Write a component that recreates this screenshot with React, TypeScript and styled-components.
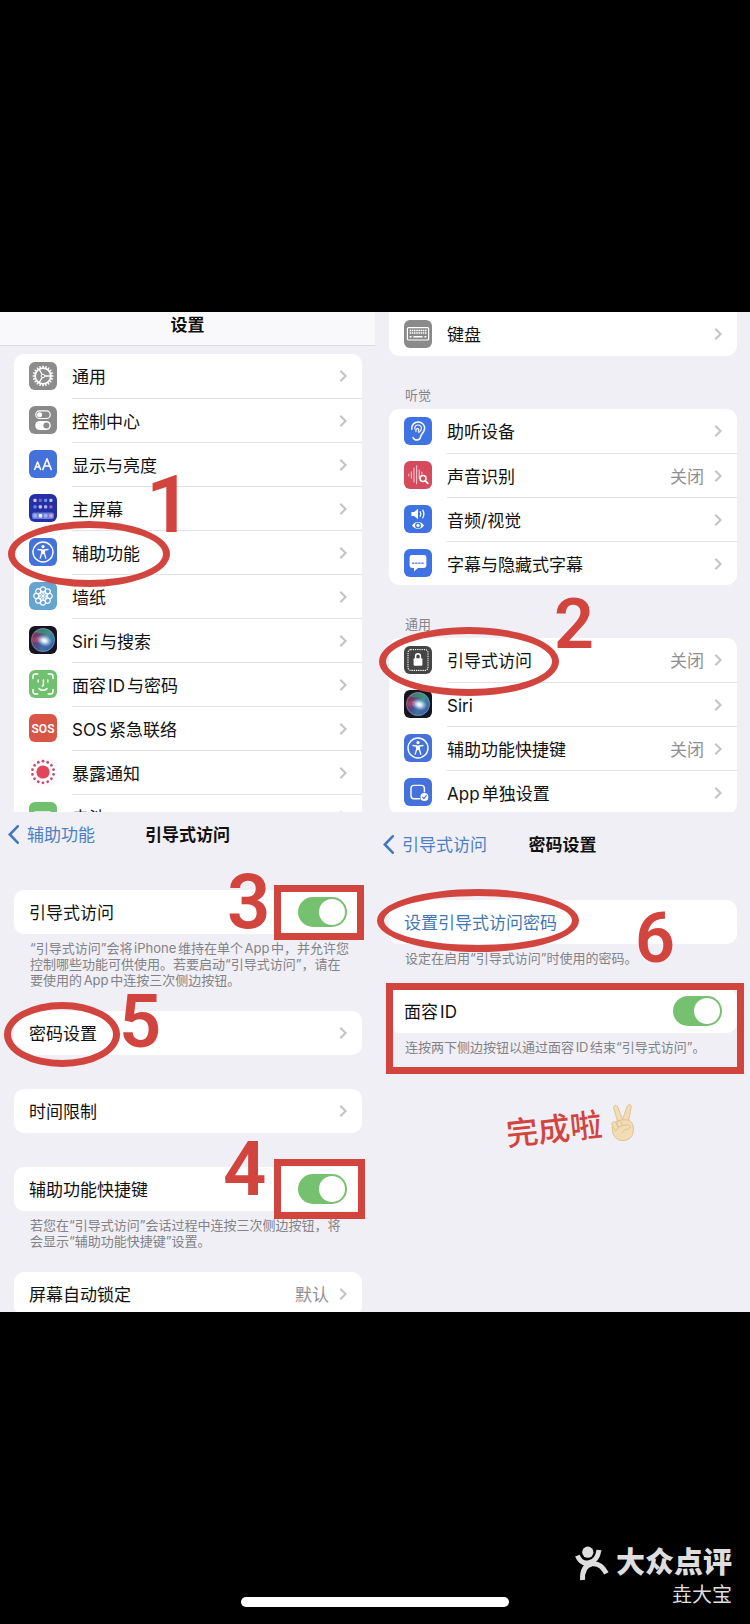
import React from "react";
import styled, { createGlobalStyle } from "styled-components";

const RED = "#d2453f";

const GlobalStyle = createGlobalStyle`
  * { box-sizing: border-box; }
  body {
    margin: 0;
    background: #000;
    color: #111;
    font-family: Inter, "Noto Sans CJK SC", sans-serif;
    font-size: 17px;
    line-height: 24px;
    text-autospace: normal;
  }
`;

const Page = styled.main`
  padding-top: 312px;
`;

const Collage = styled.div`
  display: grid;
  grid-template-columns: 1fr 1fr;
  grid-template-rows: 500px 500px;
  background: #f0eff5;
`;

const Panel = styled.section<{ $top?: number }>`
  position: relative;
  overflow: hidden;
  padding-top: ${(p) => p.$top ?? 0}px;
`;

const TitleBar = styled.header`
  height: 34px;
  margin-bottom: 8px;
  padding-top: 1px;
  background: #f9f9fb;
  border-bottom: 1px solid #dcdbe1;
  text-align: center;
`;

const Title = styled.h2`
  margin: 0;
  font-size: 17px;
  line-height: 24px;
  font-weight: 700;
`;

const NavBar = styled.header`
  display: grid;
  grid-template-columns: 1fr auto 1fr;
  align-items: center;
  height: 44px;
  margin-bottom: 34px;
  padding: 1px 8px 0;
`;

const BackLink = styled.a`
  display: flex;
  align-items: center;
  gap: 8px;
  color: #4b7fc6;
  text-decoration: none;
`;

const Card = styled.ul<{ $open?: boolean }>`
  list-style: none;
  margin: 0 13px 0 14px;
  padding: 0;
  background: #fff;
  border-radius: ${(p) => (p.$open ? "0 0 10px 10px" : "10px")};
`;

const Item = styled.li`
  & + & [data-body] {
    border-top: 1px solid #e3e3e6;
  }
`;

const rowStyle = `
  display: flex;
  align-items: center;
  gap: 15px;
  width: 100%;
  height: 44px;
  padding: 0 0 0 15px;
  border: 0;
  background: none;
  color: inherit;
  font: inherit;
  text-align: left;
`;

const RowButton = styled.button`
  ${rowStyle}
`;

const RowLabel = styled.label`
  ${rowStyle}
`;

const RowBody = styled.span<{ $tint?: string }>`
  flex: 1;
  display: flex;
  align-items: center;
  gap: 10px;
  height: 44px;
  padding-right: 15px;
  color: ${(p) => p.$tint ?? "inherit"};
`;

const Name = styled.span`
  flex: 1;
  padding-top: 2px;
  white-space: nowrap;
`;

const Value = styled.span`
  padding-top: 2px;
  color: #8f8f93;
`;

const Switch = styled.input`
  appearance: none;
  width: 49px;
  height: 30px;
  margin: 0;
  padding: 2px;
  border-radius: 15px;
  background: #b9b9be;
  display: flex;
  &::before {
    content: "";
    width: 26px;
    height: 26px;
    border-radius: 50%;
    background: #fff;
  }
  &:checked {
    background: #76c16f;
    justify-content: flex-end;
  }
`;

const GroupLabel = styled.h3`
  margin: 0;
  padding: 29px 30px 4px;
  color: #858589;
  font-size: 13px;
  line-height: 20px;
  font-weight: 400;
`;

const Note = styled.p`
  margin: 0;
  padding: 6px 14px 23px 30px;
  color: #828287;
  font-size: 13px;
  line-height: 16px;
  white-space: pre;
`;

const Spacer = styled.div`
  height: 34px;
`;

type Box = { $x: number; $y: number; $w?: number; $h?: number };

const Ring = styled.span<Box & { $square?: boolean }>`
  position: absolute;
  left: ${(p) => p.$x}px;
  top: ${(p) => p.$y}px;
  width: ${(p) => p.$w}px;
  height: ${(p) => p.$h}px;
  border: 7px solid ${RED};
  border-radius: ${(p) => (p.$square ? "0" : "50%")};
  pointer-events: none;
`;

const Step = styled.span<Box & { $size: number }>`
  position: absolute;
  left: ${(p) => p.$x}px;
  top: ${(p) => p.$y}px;
  color: ${RED};
  font-family: Roboto, sans-serif;
  font-size: ${(p) => p.$size}px;
  line-height: 56px;
  font-weight: 600;
`;

const Done = styled.p`
  position: absolute;
  left: 131px;
  top: 296px;
  display: flex;
  align-items: center;
  gap: 8px;
  margin: 0;
  color: ${RED};
  font-size: 32px;
  line-height: 40px;
  font-weight: 500;
  transform: rotate(-6deg);
`;

const Footer = styled.footer`
  display: grid;
  grid-template-columns: 1fr 268px 1fr;
  align-items: end;
  padding: 231px 0 16px;
`;

const HomeBar = styled.div`
  grid-column: 2;
  height: 10px;
  border-radius: 5px;
  background: #fff;
`;

const Credit = styled.div`
  display: flex;
  flex-direction: column;
  align-items: flex-end;
  padding-right: 18px;
  color: #dedede;
`;

const Brand = styled.div`
  display: flex;
  align-items: center;
  gap: 6px;
  font-size: 29px;
  line-height: 40px;
  font-weight: 900;
`;

const Author = styled.div`
  font-size: 20px;
  line-height: 24px;
`;

function Chevron() {
  return (
    <svg width="8" height="14" viewBox="0 0 8 14" aria-hidden="true">
      <path d="M1.3 1.8 6.6 7l-5.300 5.200" fill="none" stroke="#c3c3c6" strokeWidth="2.1" />
    </svg>
  );
}

function BackArrow() {
  return (
    <svg width="11" height="19" viewBox="0 0 11 19" aria-hidden="true">
      <path d="M9.7 1.3 1.8 9.5l7.9 8.2" fill="none" stroke="#4577c0" strokeWidth="2.6" strokeLinecap="round" />
    </svg>
  );
}

const W = { fill: "none", stroke: "#fff", strokeLinecap: "round", strokeLinejoin: "round" } as const;

function around(n: number, draw: (angle: number) => React.ReactNode) {
  return Array.from({ length: n }, (_, i) => <g key={i}>{draw((i * 360) / n)}</g>);
}

const person = (
  <>
    <circle cx="14" cy="14" r="10" {...W} strokeWidth="1.4" />
    <circle cx="14" cy="8.6" r="1.6" fill="#fff" />
    <path d="M9 11.5 12.6 12v3.400L11.200 20.200M19 11.500 15.400 12v3.400l1.400 4.800" {...W} strokeWidth="1.3" />
    <path d="M12.2 11.600h3.600v4.600h-3.600z" fill="#fff" />
  </>
);

const glyphs: Record<string, { bg: string; art: React.ReactNode }> = {
  gear: {
    bg: "#8c8c8c",
    art: (
      <>
        <circle cx="14" cy="14" r="7.8" {...W} strokeWidth="1.7" />
        {around(20, (a) => (
          <path d="M14 4.200v1.800" {...W} strokeWidth="1.5" transform={`rotate(${a} 14 14)`} />
        ))}
        <circle cx="14" cy="14" r="1.8" {...W} strokeWidth="1" />
        {[0, 120, 240].map((a) => (
          <path key={a} d="M16 14h5.600" {...W} strokeWidth="1.3" transform={`rotate(${a} 14 14)`} />
        ))}
      </>
    ),
  },
  control: {
    bg: "#8a8a8a",
    art: (
      <>
        <rect x="6.8" y="4.9" width="14.4" height="7.6" rx="3.8" {...W} strokeWidth="1.2" />
        <circle cx="10.6" cy="8.7" r="2.5" fill="#fff" />
        <rect x="6.2" y="15" width="15.6" height="9" rx="4.5" fill="#fff" />
        <circle cx="17.4" cy="19.5" r="3" fill="#8a8a8a" />
      </>
    ),
  },
  display: {
    bg: "#4472da",
    art: (
      <>
        <path d="m5.600 19.500 3-7.500 3 7.500M6.600 17h4" {...W} strokeWidth="1.5" />
        <path d="m13.800 19.500 4.200-10.700 4.200 10.700M15.200 16h5.600" {...W} strokeWidth="1.6" />
      </>
    ),
  },
  home: {
    bg: "#2430a4",
    art: (
      <>
        {["#c9cbf5", "#7a63c8", "#6f8df0", "#b5c9fa", "#5a8df2", "#c3cdf8", "#a6b6f4", "#9a5fb8"].map((c, i) => (
          <rect key={i} x={4.4 + (i % 4) * 5.3} y={i < 4 ? 4.8 : 11.2} width="3.2" height="3.2" rx="1" fill={c} />
        ))}
        <rect x="3" y="18.6" width="22" height="6.4" rx="2" fill="#6d7fdc" />
        {["#93b4fa", "#f2f4ff", "#9fb3f5", "#d7a1c6"].map((c, i) => (
          <rect key={c} x={4.4 + i * 5.3} y="20" width="3.4" height="3.4" rx="1" fill={c} />
        ))}
      </>
    ),
  },
  access: { bg: "#4472da", art: person },
  wallpaper: {
    bg: "#66a3cf",
    art: (
      <>
        {around(8, (a) => (
          <circle cx="14" cy="7.4" r="2.600" {...W} strokeWidth="1.2" transform={`rotate(${a} 14 14)`} />
        ))}
        {around(8, (a) => (
          <circle cx="14" cy="10.4" r="1.5" {...W} strokeWidth="0.7" transform={`rotate(${a + 22} 14 14)`} />
        ))}
        <circle cx="14" cy="14" r="1.5" fill="#fff" />
      </>
    ),
  },
  siri: {
    bg: "#17131f",
    art: (
      <>
        <defs>
          <linearGradient id="orb" x1="0" y1="0.3" x2="1" y2="0.7">
            <stop offset="0" stopColor="#8e2a52" />
            <stop offset="0.35" stopColor="#5b4a78" />
            <stop offset="0.6" stopColor="#4a8f9b" />
            <stop offset="1" stopColor="#2f5fa8" />
          </linearGradient>
          <radialGradient id="glow">
            <stop offset="0" stopColor="#fff" />
            <stop offset="0.3" stopColor="#e4f3ff" stopOpacity="0.9" />
            <stop offset="1" stopColor="#8fbdf0" stopOpacity="0" />
          </radialGradient>
        </defs>
        <circle cx="14" cy="14" r="12" fill="url(#orb)" />
        <path d="M5.200 6C10 1 19 1 23.500 7.500 18 7 12 9 5.200 6Z" fill="#3d8f78" opacity="0.8" />
        <path d="M4 18c4-1 7-5 12-4s6 3 9 2c-1 6-6 10-11 10S5 23 4 18Z" fill="#3a4fa8" opacity="0.5" />
        <path d="M3 13c3-3 7-3 12 1-4 2-8 3-11 2Z" fill="#d4436e" opacity="0.5" />
        <circle cx="14" cy="14" r="11.4" fill="none" stroke="#7fb0ac" strokeOpacity="0.6" strokeWidth="0.8" />
        <ellipse cx="15.500" cy="14.500" rx="8.500" ry="6" fill="url(#glow)" transform="rotate(18 15 14)" />
      </>
    ),
  },
  face: {
    bg: "#70c06f",
    art: (
      <g {...W} strokeWidth="1.5">
        <path d="M4 8.6V6.4A2.4 2.4 0 0 1 6.4 4h2.4M19.2 4h2.4A2.4 2.4 0 0 1 24 6.4v2.2M24 19.4v2.2a2.4 2.4 0 0 1-2.4 2.4h-2.4M8.8 24H6.4A2.4 2.4 0 0 1 4 21.6v-2.2" />
        <path d="M9.2 10v2M18.8 10v2M14.4 10v5c0 .7-.4 1-1.2 1M10 18.6c2.2 2.2 5.8 2.2 8 0" />
      </g>
    ),
  },
  sos: {
    bg: "#d85645",
    art: (
      <text x="14" y="18.500" textAnchor="middle" fill="#fff" fontFamily="Roboto, sans-serif" fontSize="12" fontWeight="600">
        SOS
      </text>
    ),
  },
  exposure: {
    bg: "#fdf9fb",
    art: (
      <>
        <circle cx="14" cy="14" r="6.6" fill="#e0455b" />
        {around(14, (a) => (
          <circle cx="14" cy="3.200" r="1.4" fill="#b8506f" transform={`rotate(${a} 14 14)`} />
        ))}
      </>
    ),
  },
  battery: {
    bg: "#70c06f",
    art: <rect x="4" y="9" width="19" height="10" rx="3" fill="#d3efd2" />,
  },
  keyboard: {
    bg: "#8a8a8a",
    art: (
      <>
        <rect x="3.4" y="7.6" width="21.2" height="12.4" rx="1" {...W} strokeWidth="1.2" />
        <path d="M5.6 10.4h17M5.6 13h17" fill="none" stroke="#fff" strokeWidth="1.5" strokeDasharray="1.5 0.7" />
        <path d="M5.6 16.8h2M9.4 16.8h9.2M20.4 16.8h2" fill="none" stroke="#fff" strokeWidth="1.5" />
      </>
    ),
  },
  ear: {
    bg: "#3f72e2",
    art: (
      <g {...W} strokeWidth="1.5">
        <path d="M7.8 12.2C7.4 7.6 10.4 5 14.2 5c4 0 6.6 3 6.4 6.600-.2 3.600-3 4.800-3.800 7.600-.6 2.400-1.800 3.800-3.800 3.800-1.800 0-3.400-1-4-2.600" />
        <path d="M10.8 11.800c0-2.600 1.400-3.800 3.400-3.800s3.400 1.600 3.200 3.800c-.2 1.800-1.400 2.800-2.600 3.600M12 14.600c-.6-2 .6-3.400 2-3 1 .4 1 1.800.2 2.600" strokeWidth="1.2" />
      </g>
    ),
  },
  sound: {
    bg: "#d54a5c",
    art: (
      <g {...W} strokeWidth="1.1">
        <path d="M4.800 13v2M7.400 10.800v6.400M10 7v14M12.600 4.800v18M15.200 9v8.400M17.800 11v2" opacity="0.7" />
        <circle cx="19" cy="17.400" r="3" strokeWidth="1.5" />
        <path d="m21.300 19.800 2.600 2.600" strokeWidth="1.7" />
      </g>
    ),
  },
  audio: {
    bg: "#3f72e2",
    art: (
      <>
        <path d="M7.4 7h2.8L14 3.8v10.4L10.2 11H7.4z" fill="#fff" />
        <path d="M16.2 6.8c.8 1.4.8 3 0 4.4M18.8 5.2c1.400 2.400 1.400 5 0 7.600" {...W} strokeWidth="1.3" />
        <path d="M8 20.400c3-4.600 9-4.600 12 0-3 4.600-9 4.600-12 0Z" fill="#fff" />
        <circle cx="14" cy="20.4" r="2.3" {...W} stroke="#3f72e2" strokeWidth="1.3" />
      </>
    ),
  },
  caption: {
    bg: "#3f72e2",
    art: (
      <>
        <path d="M8 6h12a2.4 2.4 0 0 1 2.4 2.4v8.2A2.4 2.4 0 0 1 20 19h-6l-4 3.6V19H8a2.4 2.4 0 0 1-2.4-2.4V8.4A2.4 2.4 0 0 1 8 6Z" fill="#fff" />
        <path d="M8 14.200h12" fill="none" stroke="#3f72e2" strokeWidth="1.4" strokeDasharray="2.400 0.700" opacity="0.8" />
      </>
    ),
  },
  guided: {
    bg: "#454545",
    art: (
      <>
        <rect x="4" y="3.6" width="20" height="20.8" rx="3" {...W} strokeWidth="1.1" strokeDasharray="0.4 1.8" />
        <rect x="9.6" y="12.2" width="8.8" height="7.600" rx="1" fill="#fff" />
        <path d="M11.600 12.200v-2a2.400 2.400 0 0 1 4.800 0v2" {...W} strokeWidth="1.5" />
      </>
    ),
  },
  app: {
    bg: "#4472da",
    art: (
      <>
        <rect x="7" y="7.4" width="13.4" height="13.4" rx="3" {...W} strokeWidth="1.4" />
        <circle cx="20.4" cy="19" r="4.8" fill="#4472da" />
        <circle cx="20.4" cy="19" r="4" fill="#fff" />
        <path d="m18.600 19.200 1.300 1.400 2.400-3" {...W} stroke="#4472da" strokeWidth="1.1" />
      </>
    ),
  },
};

function AppIcon({ name }: { name: string }) {
  const glyph = glyphs[name];
  return (
    <svg width="28" height="28" viewBox="0 0 28 28" aria-hidden="true">
      <rect width="28" height="28" rx="6" fill={glyph.bg} />
      {glyph.art}
    </svg>
  );
}

type RowProps = { icon?: string; label: string; value?: string; toggle?: boolean; action?: boolean };

function Row({ icon, label, value, toggle, action }: RowProps) {
  const body = (
    <>
      {icon && <AppIcon name={icon} />}
      <RowBody data-body $tint={action ? "#3f78b4" : undefined}>
        <Name>{label}</Name>
        {value && <Value>{value}</Value>}
        {toggle && <Switch type="checkbox" role="switch" defaultChecked />}
        {!toggle && !action && <Chevron />}
      </RowBody>
    </>
  );
  return <Item>{toggle ? <RowLabel>{body}</RowLabel> : <RowButton type="button">{body}</RowButton>}</Item>;
}

function Nav({ back, title }: { back: string; title: string }) {
  return (
    <NavBar>
      <BackLink href="#">
        <BackArrow />
        {back}
      </BackLink>
      <Title>{title}</Title>
    </NavBar>
  );
}

function VictoryHand() {
  return (
    <svg width="26" height="38" viewBox="0 0 26 38" aria-hidden="true">
      <g fill="#f3dcb4" stroke="#dcc08f" strokeWidth="0.9" strokeLinejoin="round">
        <path d="M8.2 18 5.6 4.200C5 .8 9 0 9.800 3.200L13.600 17z" />
        <path d="M12.600 17 19.200 3.400C20.600.6 24 2 23 5L18.600 19z" />
        <path d="M3 20c3-3.600 8-4 12-3.600 5 .4 8 3 8 8C23 32 19.600 37 12.600 37 5.600 37 2 32 2 26c0-2.400.2-4.600 1-6Z" />
        <path d="M2.200 20.600c-1.200-3 2.600-4.600 4-2l1.800 4.600c.8 3-3 4-4.200 1.400z" />
        <path d="M7.400 19.600c-.6-3 3.200-4 4.200-1.200l1 4c.4 2.800-3.200 3.400-4 .8z" />
        <path d="M5 27c3-4.400 8-6 13-5 2.400.6 2.200 4-.4 4-3 0-4.600.6-6 3" />
      </g>
    </svg>
  );
}

function BrandMark() {
  return (
    <svg width="35" height="35" viewBox="0 0 35 35" aria-hidden="true">
      <circle cx="12.800" cy="6.200" r="5.600" fill="#dedede" />
      <path d="M2.400 9.600C5 16 9 18 14 16.800 20 15.600 23 11 24 4" fill="none" stroke="#dedede" strokeWidth="5" />
      <path d="M7.600 34C7 24 11 19 17 17.800c6-.8 11 3 14.400 9.600" fill="none" stroke="#dedede" strokeWidth="5" />
    </svg>
  );
}

export default function App() {
  return (
    <Page>
      <GlobalStyle />
      <Collage>
        <Panel>
          <TitleBar>
            <Title>设置</Title>
          </TitleBar>
          <Card>
            <Row icon="gear" label="通用" />
            <Row icon="control" label="控制中心" />
            <Row icon="display" label="显示与亮度" />
            <Row icon="home" label="主屏幕" />
            <Row icon="access" label="辅助功能" />
            <Row icon="wallpaper" label="墙纸" />
            <Row icon="siri" label="Siri与搜索" />
            <Row icon="face" label="面容ID与密码" />
            <Row icon="sos" label="SOS紧急联络" />
            <Row icon="exposure" label="暴露通知" />
            <Row icon="battery" label="电池" />
          </Card>
          <Ring $x={8} $y={209} $w={162} $h={66} />
          <Step $x={146} $y={165} $size={80}>1</Step>
        </Panel>

        <Panel>
          <Card $open>
            <Row icon="keyboard" label="键盘" />
          </Card>
          <GroupLabel>听觉</GroupLabel>
          <Card>
            <Row icon="ear" label="助听设备" />
            <Row icon="sound" label="声音识别" value="关闭" />
            <Row icon="audio" label="音频/视觉" />
            <Row icon="caption" label="字幕与隐藏式字幕" />
          </Card>
          <GroupLabel>通用</GroupLabel>
          <Card>
            <Row icon="guided" label="引导式访问" value="关闭" />
            <Row icon="siri" label="Siri" />
            <Row icon="access" label="辅助功能快捷键" value="关闭" />
            <Row icon="app" label="App单独设置" />
          </Card>
          <Ring $x={4} $y={315} $w={180} $h={69} />
          <Step $x={179} $y={284} $size={70}>2</Step>
        </Panel>

        <Panel>
          <Nav back="辅助功能" title="引导式访问" />
          <Card>
            <Row label="引导式访问" toggle />
          </Card>
          <Note>{"“引导式访问”会将iPhone维持在单个App中，并允许您\n控制哪些功能可供使用。若要启动“引导式访问”，请在\n要使用的App中连按三次侧边按钮。"}</Note>
          <Card>
            <Row label="密码设置" />
          </Card>
          <Spacer />
          <Card>
            <Row label="时间限制" />
          </Card>
          <Spacer />
          <Card>
            <Row label="辅助功能快捷键" toggle />
          </Card>
          <Note>{"若您在“引导式访问”会话过程中连按三次侧边按钮，将\n会显示“辅助功能快捷键”设置。"}</Note>
          <Card>
            <Row label="屏幕自动锁定" value="默认" />
          </Card>
          <Ring $square $x={274} $y={73} $w={90} $h={55} />
          <Step $x={227} $y={62} $size={76}>3</Step>
          <Ring $x={4} $y={190} $w={116} $h={65} />
          <Step $x={119} $y={182} $size={74}>5</Step>
          <Ring $square $x={274} $y={347} $w={91} $h={60} />
          <Step $x={223} $y={329} $size={76}>4</Step>
        </Panel>

        <Panel $top={10}>
          <Nav back="引导式访问" title="密码设置" />
          <Card>
            <Row label="设置引导式访问密码" action />
          </Card>
          <Note>设定在启用“引导式访问”时使用的密码。</Note>
          <Card>
            <Row label="面容ID" toggle />
          </Card>
          <Note>连按两下侧边按钮以通过面容ID结束“引导式访问”。</Note>
          <Ring $x={2} $y={77} $w={202} $h={63} />
          <Step $x={260} $y={98} $size={70}>6</Step>
          <Ring $square $x={11} $y={171} $w={358} $h={91} />
          <Done>
            完成啦
            <VictoryHand />
          </Done>
        </Panel>
      </Collage>

      <Footer>
        <HomeBar />
        <Credit>
          <Brand>
            <BrandMark />
            大众点评
          </Brand>
          <Author>垚大宝</Author>
        </Credit>
      </Footer>
    </Page>
  );
}
